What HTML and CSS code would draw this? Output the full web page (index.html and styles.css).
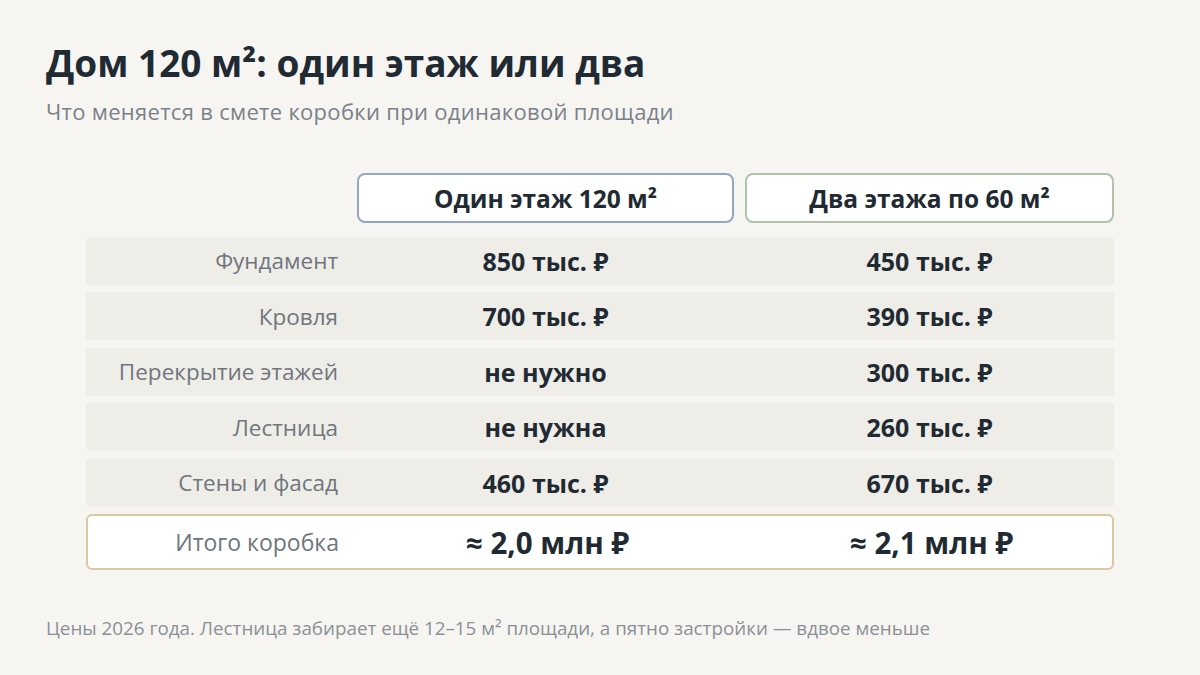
FILE: index.html
```html
<!DOCTYPE html>
<html lang="ru">
<head>
<meta charset="utf-8">
<link rel="stylesheet" href="styles.css">
</head>
<body>
<main class="page">
  <h1 class="title">Дом 120 м²: один этаж или два</h1>
  <p class="subtitle">Что меняется в смете коробки при одинаковой площади</p>

  <section class="table">
    <div class="head">
      <div class="head-spacer"></div>
      <div class="head-cell head-one">Один этаж 120 м²</div>
      <div class="head-cell head-two">Два этажа по 60 м²</div>
    </div>

    <div class="row">
      <div class="label">Фундамент</div>
      <div class="val">850 тыс. ₽</div>
      <div class="val val-two">450 тыс. ₽</div>
    </div>
    <div class="row">
      <div class="label">Кровля</div>
      <div class="val">700 тыс. ₽</div>
      <div class="val val-two">390 тыс. ₽</div>
    </div>
    <div class="row">
      <div class="label">Перекрытие этажей</div>
      <div class="val">не нужно</div>
      <div class="val val-two">300 тыс. ₽</div>
    </div>
    <div class="row">
      <div class="label">Лестница</div>
      <div class="val">не нужна</div>
      <div class="val val-two">260 тыс. ₽</div>
    </div>
    <div class="row">
      <div class="label">Стены и фасад</div>
      <div class="val">460 тыс. ₽</div>
      <div class="val val-two">670 тыс. ₽</div>
    </div>
    <div class="row total">
      <div class="label">Итого коробка</div>
      <div class="val">≈ 2,0 млн ₽</div>
      <div class="val val-two">≈ 2,1 млн ₽</div>
    </div>
  </section>

  <p class="note">Цены 2026 года. Лестница забирает ещё 12–15 м² площади, а пятно застройки — вдвое меньше</p>
</main>
</body>
</html>
```

FILE: styles.css
```css
* { box-sizing: border-box; }

html, body {
  margin: 0;
  padding: 0;
  background: #f6f5f2;
}

body {
  width: 1200px;
  height: 675px;
  overflow: hidden;
  font-family: "Open Sans", "Noto Sans", "DejaVu Sans", sans-serif;
  color: #1f2a33;
}

.page {
  padding: 41px 46px 0 46px;
}

.title {
  margin: 0;
  font-size: 37px;
  line-height: 44px;
  font-weight: 700;
  color: #1f2a33;
}

.subtitle {
  margin: 12px 0 0 0;
  font-size: 22px;
  line-height: 28px;
  color: #7b8189;
  letter-spacing: 0.3px;
}

.table {
  margin: 48px 0 0 40px;
  width: 1028px;
  display: flex;
  flex-direction: column;
  gap: 7.5px;
}

.head,
.row {
  display: grid;
  grid-template-columns: 260px 377px 369px;
  column-gap: 11px;
  align-items: center;
}

.head {
  margin-bottom: 6px;
}

.head-cell {
  height: 50px;
  display: flex;
  align-items: center;
  justify-content: center;
  background: #ffffff;
  border: 2px solid #93a6c2;
  border-radius: 8px;
  font-size: 24.5px;
  font-weight: 700;
  color: #1f2a33;
}

.head-two {
  border-color: #aec3a8;
}

.row {
  height: 48px;
  background: #efede8;
  border-radius: 4px;
}

.label {
  text-align: right;
  padding-right: 8px;
  font-size: 22.5px;
  color: #6f767d;
}

.val {
  text-align: center;
  font-size: 25px;
  font-weight: 700;
  color: #1f2a33;
}

.total {
  height: 56px;
  background: #ffffff;
  border: 2px solid #dcc7a0;
  border-radius: 6px;
}

.total .label {
  padding-right: 9px;
  font-size: 23px;
}

.total .val {
  font-size: 29.5px;
}

.note {
  margin: 45px 0 0 0;
  font-size: 18.8px;
  line-height: 26px;
  color: #8b9096;
}
```
